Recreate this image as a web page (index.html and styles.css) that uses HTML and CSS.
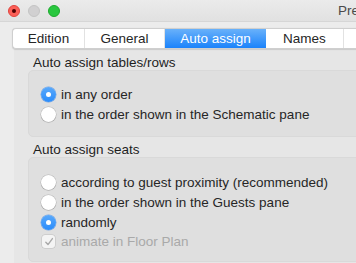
FILE: index.html
```html
<!DOCTYPE html>
<html>
<head>
<meta charset="utf-8">
<link rel="stylesheet" href="styles.css">
</head>
<body>
<div class="titlebar">
  <span class="light red"><span class="dot"></span></span>
  <span class="light gray"></span>
  <span class="light green"></span>
  <span class="title">Preferences</span>
</div>
<div class="content">
  <div class="tabs">
    <div class="tab t1">Edition</div>
    <div class="tab t2">General</div>
    <div class="tab t3 selected">Auto assign</div>
    <div class="tab t4">Names</div>
    <div class="tab t5"></div>
  </div>
  <div class="panel">
    <div class="section-label">Auto assign tables/rows</div>
    <div class="group g1">
      <div class="row"><span class="radio on"></span><span>in any order</span></div>
      <div class="row"><span class="radio"></span><span>in the order shown in the Schematic pane</span></div>
    </div>
    <div class="section-label second">Auto assign seats</div>
    <div class="group g2">
      <div class="row"><span class="radio"></span><span>according to guest proximity (recommended)</span></div>
      <div class="row"><span class="radio"></span><span>in the order shown in the Guests pane</span></div>
      <div class="row"><span class="radio on"></span><span>randomly</span></div>
      <div class="row disabled"><span class="check"><svg width="10" height="10" viewBox="0 0 10 10"><path d="M1.8 5.3 L4 7.6 L8.4 1.6" fill="none" stroke="#a9a9a9" stroke-width="1.4" stroke-linecap="round" stroke-linejoin="round"/></svg></span><span>animate in Floor Plan</span></div>
    </div>
  </div>
</div>
</body>
</html>
```
FILE: styles.css
```css
html, body {
  margin: 0;
  padding: 0;
}
body {
  width: 356px;
  height: 263px;
  overflow: hidden;
  background: #ececec;
  font-family: "Liberation Sans", Arial, sans-serif;
  font-size: 13.5px;
  color: #262626;
}
.titlebar {
  height: 21px;
  display: flex;
  align-items: center;
  padding-left: 8px;
  gap: 8px;
  background: linear-gradient(#ebebeb, #e1e1e1);
  border-bottom: 1px solid #d6d6d6;
  white-space: nowrap;
}
.light {
  width: 12px;
  height: 12px;
  border-radius: 50%;
  flex: none;
  display: flex;
  align-items: center;
  justify-content: center;
  box-sizing: border-box;
}
.red { background: #fc5f57; border: 0.5px solid #e0443e; }
.red .dot { width: 4px; height: 4px; border-radius: 50%; background: #4d0000; }
.gray { background: #d1d0d1; border: 0.5px solid #c4c4c4; }
.green { background: #29c73f; border: 0.5px solid #1daa2d; }
.title {
  flex: none;
  margin-left: 270px;
  color: #4a4a4a;
  font-size: 13.5px;
}
.content {
  padding-top: 6px;
}
.tabs {
  display: flex;
  margin-left: 12px;
  height: 19px;
  background: #fff;
  border: 0.5px solid #cfcfcf;
  border-right: none;
  border-radius: 4px 0 0 4px;
  box-shadow: 0 0.5px 1px rgba(0,0,0,0.12);
  position: relative;
  z-index: 1;
  width: 344px;
  overflow: hidden;
}
.tab {
  display: flex;
  align-items: center;
  justify-content: center;
  border-right: 1px solid #e2e2e2;
  color: #262626;
  flex: none;
}
.t1 { width: 71px; }
.t2 { width: 79px; }
.t3 { width: 101px; }
.t4 { width: 77px; }
.t5 { width: 12px; border-right: none; }
.tab.selected {
  background: linear-gradient(#69b1fa, #1b83fb);
  color: #fff;
  border-right: none;
}
.panel {
  margin-left: 14px;
  margin-top: -1px;
  background: #e6e6e6;
  height: 240px;
  padding: 7px 0 0 14px;
  overflow: hidden;
}
.section-label {
  height: 15px;
  line-height: 15px;
  padding-left: 5px;
  color: #1f1f1f;
}
.section-label.second {
  margin-top: 5px;
}
.group {
  background: #dfdfdf;
  border-radius: 5px;
  border: 0.5px solid #d9d9d9;
  padding: 13px 0 12px 12px;
  margin-right: -10px;
}
.g2 {
  padding-top: 14px;
  padding-bottom: 10px;
}
.row {
  display: flex;
  align-items: center;
  gap: 5px;
  height: 20px;
  white-space: nowrap;
}
.g2 .row.disabled { height: 19px; }
.radio {
  width: 15px;
  height: 15px;
  border-radius: 50%;
  background: #fff;
  box-shadow: 0 0 0 0.5px rgba(0,0,0,0.18), 0 0.5px 1px rgba(0,0,0,0.15);
  flex: none;
  display: flex;
  align-items: center;
  justify-content: center;
}
.radio.on {
  background: linear-gradient(#5aa9fb, #2a8cfb);
  box-shadow: 0 0 0 0.5px rgba(20,110,230,0.5);
}
.radio.on::after {
  content: "";
  width: 5px;
  height: 5px;
  border-radius: 50%;
  background: #fff;
}
.check {
  width: 13px;
  height: 13px;
  margin-left: 1px;
  margin-right: 1px;
  border-radius: 3px;
  background: #f4f4f4;
  box-shadow: 0 0 0 0.5px rgba(0,0,0,0.15);
  flex: none;
  display: flex;
  align-items: center;
  justify-content: center;
}
.disabled {
  color: #a9a9a9;
}
```
